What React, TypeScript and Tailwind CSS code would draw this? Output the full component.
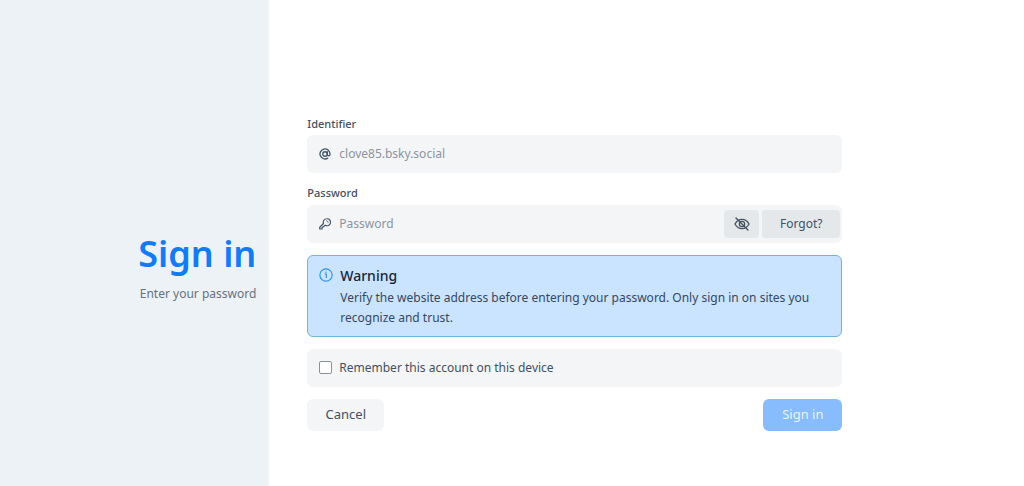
import { useState } from "react";

const AtIcon = () => (
  <svg viewBox="0 0 24 24" className="size-3 shrink-0 text-[#43546a]" fill="none" stroke="currentColor" strokeWidth="2.6" strokeLinecap="round" aria-hidden="true">
    <circle cx="12" cy="12" r="4.5" />
    <path d="M16.5 7.5v5.8a2.8 2.8 0 0 0 5.5 0V12a10 10 0 1 0-4.5 8.3" />
  </svg>
);

const KeyIcon = () => (
  <svg viewBox="0 0 24 24" className="size-3 shrink-0 text-[#43546a]" fill="none" stroke="currentColor" strokeWidth="2.4" strokeLinecap="round" strokeLinejoin="round" aria-hidden="true">
    <path d="M15.5 1.500a7 7 0 0 0-6.500 9.500L1.500 18.500V22h4.500v-2.500l6.500-5A7 7 0 1 0 15.500 1.500Z" />
    <path d="M15 5.500a3.500 3.500 0 0 1 3.500 3.500" strokeWidth="1.5" />
  </svg>
);

const EyeSlashIcon = () => (
  <svg viewBox="0 0 24 24" className="size-4" fill="none" stroke="currentColor" strokeWidth="2" strokeLinecap="round" aria-hidden="true">
    <path d="M1.500 12C4 7.300 7.700 5 12 5s8 2.300 10.500 7c-2.500 4.700-6.200 7-10.500 7s-8-2.300-10.500-7Z" />
    <circle cx="12" cy="12" r="4" />
    <path d="M3 3l18 18" />
  </svg>
);

const InfoIcon = () => (
  <svg viewBox="0 0 24 24" className="mt-1 size-[14px] shrink-0 text-[#2f92f0]" fill="none" stroke="currentColor" strokeWidth="2" aria-hidden="true">
    <circle cx="12" cy="12" r="10.500" />
    <path d="M10 10.500h2.500V17M12 6v2" />
  </svg>
);

export default function App() {
  const [identifier, setIdentifier] = useState("clove85.bsky.social");
  const [password, setPassword] = useState("");
  const [remember, setRemember] = useState(false);
  const [visible, setVisible] = useState(false);

  return (
    <div className="flex min-h-screen bg-white font-['Noto_Sans',sans-serif] text-xs text-[#43505f]">
      <header className="flex w-[26.3%] flex-col items-end justify-center bg-[#edf2f6] px-[13px] pt-[50px]">
        <h1 className="text-4xl font-semibold text-[#107cfa]">Sign in</h1>
        <p className="mt-3 text-[#66717e]">Enter your password</p>
      </header>
      <main className="flex flex-1 items-center px-[38px] pt-[60px]">
        <form className="flex w-full max-w-[535px] flex-col gap-3" onSubmit={(e) => e.preventDefault()}>
          <div>
            <label htmlFor="identifier" className="mb-[3px] block text-[11px] leading-4 font-medium">
              Identifier
            </label>
            <div className="flex h-[38px] items-center gap-2 rounded-md bg-[#f3f5f7] px-3">
              <AtIcon />
              <input
                id="identifier"
                value={identifier}
                onChange={(e) => setIdentifier(e.target.value)}
                className="min-w-0 flex-1 bg-transparent text-[#8c949d] outline-none"
              />
            </div>
          </div>
          <div>
            <label htmlFor="password" className="mb-1 block text-[11px] leading-4 font-medium">
              Password
            </label>
            <div className="flex h-[38px] items-center gap-2 rounded-md bg-[#f3f5f7] pr-0.5 pl-3">
              <KeyIcon />
              <input
                id="password"
                type={visible ? "text" : "password"}
                value={password}
                onChange={(e) => setPassword(e.target.value)}
                placeholder="Password"
                className="min-w-0 flex-1 bg-transparent outline-none placeholder:text-[#8c949d]"
              />
              <div className="flex gap-[3px]">
                <button
                  type="button"
                  aria-label="Show password"
                  onClick={() => setVisible(!visible)}
                  className="flex h-7 w-[35px] items-center justify-center rounded bg-[#e5e8eb]"
                >
                  <EyeSlashIcon />
                </button>
                <button type="button" className="h-7 w-[78px] rounded bg-[#e5e8eb]">
                  Forgot?
                </button>
              </div>
            </div>
          </div>
          <div className="flex gap-[7px] rounded-md border border-[#6db7dc] bg-[#cae3ff] py-2 pr-6 pl-[11px]">
            <InfoIcon />
            <div className="text-[#35485f]">
              <h2 className="text-sm leading-6 font-medium text-[#15263a]">Warning</h2>
              <p className="leading-5">
                Verify the website address before entering your password. Only sign in on sites you recognize and trust.
              </p>
            </div>
          </div>
          <label className="flex h-[38px] items-center gap-[7px] rounded-md bg-[#f3f5f7] px-3">
            <input
              type="checkbox"
              checked={remember}
              onChange={(e) => setRemember(e.target.checked)}
              className="size-[13px] appearance-none rounded-xs border border-[#8b9197] bg-white checked:bg-[#107cfa]"
            />
            Remember this account on this device
          </label>
          <div className="flex justify-between text-[13px]">
            <button type="button" className="h-8 w-[77px] rounded-md bg-[#f3f5f7]">
              Cancel
            </button>
            <button type="submit" className="h-8 w-[79px] rounded-md bg-[#87bdff] text-[#e9f3ff]">
              Sign in
            </button>
          </div>
        </form>
      </main>
    </div>
  );
}
